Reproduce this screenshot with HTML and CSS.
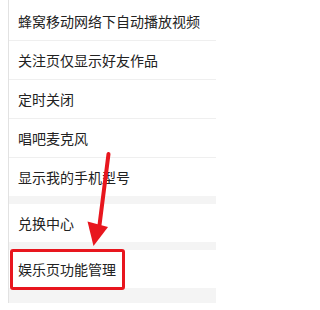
FILE: index.html
```html
<!DOCTYPE html>
<html lang="zh">
<head>
<meta charset="utf-8">
<link rel="stylesheet" href="styles.css">
</head>
<body>
<div class="page">
  <div class="panel">
    <div class="row">蜂窝移动网络下自动播放视频</div>
    <div class="row">关注页仅显示好友作品</div>
    <div class="row">定时关闭</div>
    <div class="row">唱吧麦克风</div>
    <div class="row last">显示我的手机型号</div>
    <div class="gap"></div>
    <div class="row last">兑换中心</div>
    <div class="gap"></div>
    <div class="row last highlight">娱乐页功能管理</div>
    <div class="gap end"></div>
  </div>
  <svg class="arrow" width="235" height="310" viewBox="0 0 235 310">
    <line x1="108.5" y1="154" x2="99.5" y2="225" stroke="#e8161e" stroke-width="4" stroke-linecap="round"/>
    <polygon points="87.5,221.5 108,227 93.5,246" fill="#e8161e"/>
  </svg>
</div>
</body>
</html>
```
FILE: styles.css
```css
html, body {
  margin: 0;
  padding: 0;
  background: #fff;
}
.page {
  position: relative;
  width: 235px;
  height: 310px;
  overflow: hidden;
  font-family: "Noto Sans CJK SC", "Noto Sans", sans-serif;
}
.panel {
  margin-left: 8px;
  width: 207px;
  padding-top: 2px;
  border-left: 1px solid #e2e2e2;
  background: #fff;
}
.row {
  position: relative;
  height: 38px;
  line-height: 38px;
  padding-left: 9px;
  font-size: 14px;
  color: #222;
  border-bottom: 1px solid #efefef;
  white-space: nowrap;
}
.row.last {
  border-bottom: none;
}
.gap {
  height: 8px;
  background: #f4f4f4;
}
.gap.end {
  height: 15px;
}
.highlight::after {
  content: "";
  position: absolute;
  left: 1px;
  top: -1px;
  width: 115px;
  height: 41px;
  box-sizing: border-box;
  border: 3px solid #e8161e;
  border-radius: 3px;
}
.arrow {
  position: absolute;
  left: 0;
  top: 0;
  pointer-events: none;
}
```
